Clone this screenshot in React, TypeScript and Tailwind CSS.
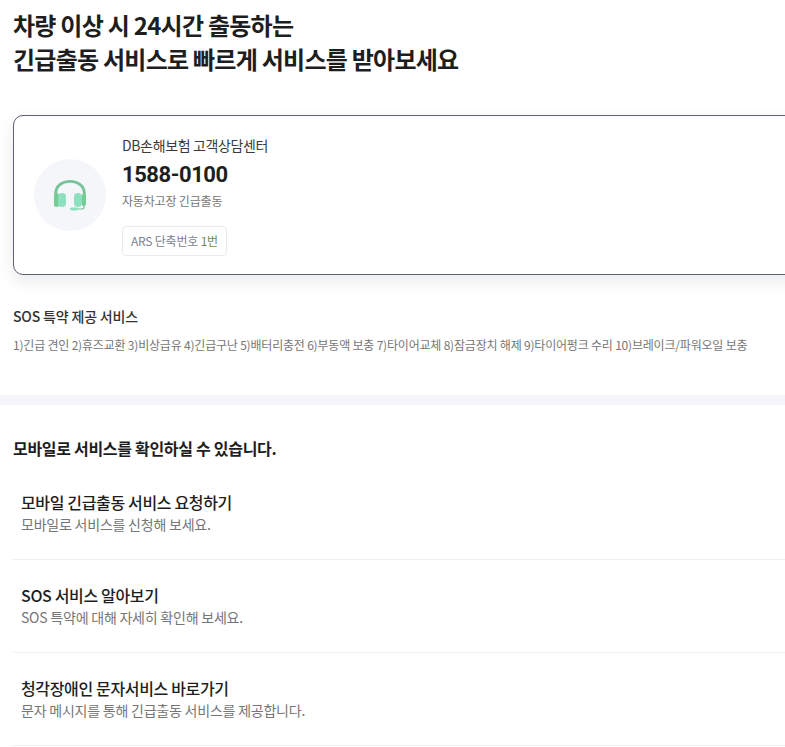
const font = "font-['Noto_Sans_CJK_KR',sans-serif]";

function Headset() {
  return (
    <svg width="34" height="34" viewBox="0 0 34 34" fill="none">
      <path d="M2.7 20 V15.5 C2.7 8 9 3.4 17 3.4 C25 3.4 31.3 8 31.3 15.5 V20" stroke="#78c29b" strokeWidth="2.8" />
      <rect x="1" y="15" width="5" height="14" rx="2.5" fill="#74cc92" />
      <rect x="28.5" y="16" width="4.5" height="12" rx="2.25" fill="#74cc92" />
      <rect x="5" y="15" width="8" height="14" rx="4" fill="#8ce0be" />
      <rect x="21" y="15" width="8" height="14" rx="4" fill="#8ce0be" />
      <path d="M31 27 V29 C31 30.5 30 31 29 31 H22" stroke="#78c29b" strokeWidth="1.2" />
      <rect x="17" y="29.6" width="8" height="2.8" rx="1.4" fill="#8ce0be" />
    </svg>
  );
}

function Row({ title, desc }: { title: string; desc: string }) {
  return (
    <div className="border-b border-[#eeeff2] pl-[8px] h-[93px] pt-[23px]">
      <div className="text-[16px] leading-[24px] font-medium tracking-[-0.35px] text-[#1e1e1e]">{title}</div>
      <div className="-mt-px text-[14px] leading-[22px] tracking-[-0.22px] text-[#767676]">{desc}</div>
    </div>
  );
}

export default function App() {
  return (
    <div className={`${font} w-[785px] h-[747px] overflow-hidden bg-white`}>
      <div className="pl-[13px] pt-[8px]">
        <h1 className="text-[24px] leading-[34px] font-bold tracking-[-0.75px] text-[#1e1e1e]">
          차량 이상 시 24시간 출동하는
          <br />
          긴급출동 서비스로 빠르게 서비스를 받아보세요
        </h1>
        <div className="mt-[39px] w-[900px] h-[160px] rounded-[10px] border border-[#5f6273] bg-white shadow-[0_6px_16px_rgba(40,50,80,0.1)] flex items-center pl-[20px]">
          <div className="w-[72px] h-[72px] rounded-full bg-[#f5f6fa] flex items-center justify-center shrink-0">
            <Headset />
          </div>
          <div className="ml-[16px]">
            <div className="text-[14px] leading-[20px] tracking-[-0.36px] text-[#3a3a3a]">DB손해보험 고객상담센터</div>
            <div className="mt-[6px] text-[22px] leading-[28px] font-bold tracking-[-0.44px] text-[#1e1e1e] font-['Roboto',sans-serif]">1588-0100</div>
            <div className="mt-[3px] text-[12px] leading-[18px] tracking-[-0.17px] text-[#767676]">자동차고장 긴급출동</div>
            <div className="mt-[16px] h-[30px] inline-flex items-center px-[8px] rounded-[4px] border border-[#e9ebf0] text-[12px] tracking-[-0.2px] text-[#7b7f8f]">
              ARS 단축번호&nbsp;<span className="text-[#6b8e4e]">1번</span>
            </div>
          </div>
        </div>
        <div className="mt-[31px] text-[14px] leading-[20px] font-medium tracking-[-0.17px] text-[#333]">SOS 특약 제공 서비스</div>
        <div className="mt-[10px] text-[12px] leading-[18px] tracking-[-0.2px] text-[#767676] whitespace-nowrap">
          1)긴급 견인 2)휴즈교환 3)비상급유 4)긴급구난 5)배터리충전 6)부동액 보충 7)타이어교체 8)잠금장치 해제 9)타이어펑크 수리 10)브레이크/파워오일 보충
        </div>
      </div>
      <div className="mt-[41px] h-[10px] bg-[#f5f6fa]" />
      <div className="pl-[13px]">
        <div className="pt-[31px] text-[16px] leading-[24px] font-bold tracking-[-0.3px] text-[#1e1e1e]">모바일로 서비스를 확인하실 수 있습니다.</div>
        <div className="mt-[7px]">
          <Row title="모바일 긴급출동 서비스 요청하기" desc="모바일로 서비스를 신청해 보세요." />
          <Row title="SOS 서비스 알아보기" desc="SOS 특약에 대해 자세히 확인해 보세요." />
          <Row title="청각장애인 문자서비스 바로가기" desc="문자 메시지를 통해 긴급출동 서비스를 제공합니다." />
        </div>
      </div>
    </div>
  );
}
